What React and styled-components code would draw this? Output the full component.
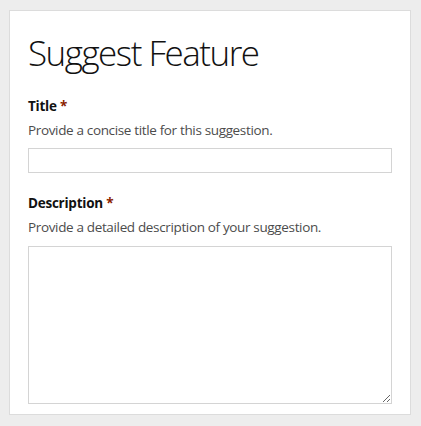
import React from "react";
import styled, { createGlobalStyle } from "styled-components";

const Global = createGlobalStyle`
  html, body { margin: 0; padding: 0; background: #ededed; }
  body { font-family: "Open Sans", "Noto Sans", sans-serif; }
  * { box-sizing: border-box; }
`;

const Page = styled.div`
  padding: 10px 10px 10px 9px;
`;

const Card = styled.div`
  width: 402px;
  height: 405px;
  background: #fff;
  border: 1px solid #dcdcdc;
  padding: 19px 18px 0 18px;
  display: flex;
  flex-direction: column;
`;

const Heading = styled.h1`
  margin: 0;
  font-family: "Open Sans", sans-serif;
  font-weight: 300;
  font-size: 35px;
  letter-spacing: -1.5px;
  line-height: 46px;
  color: #111;
`;

const Field = styled.div`
  display: flex;
  flex-direction: column;
  margin-top: ${(p) => p.$top}px;
`;

const Label = styled.label`
  font-weight: 700;
  font-size: 13.5px;
  letter-spacing: -0.25px;
  line-height: 20px;
  color: #111;
`;

const Star = styled.span`
  color: #8a1c00;
`;

const Help = styled.div`
  font-size: 13.5px;
  letter-spacing: -0.35px;
  line-height: 20px;
  color: #4c4c4c;
  margin-top: 4px;
`;

const Input = styled.input`
  margin-top: 8px;
  width: 364px;
  height: 25px;
  border: 1px solid #d4d4d4;
  background: #fff;
  outline: none;
`;

const TextArea = styled.textarea`
  margin-top: 9px;
  width: 364px;
  height: 158px;
  border: 1px solid #d4d4d4;
  background: #fff;
  outline: none;
  resize: vertical;
`;

export default function App() {
  return (
    <>
      <Global />
      <Page>
        <Card>
          <Heading>Suggest Feature</Heading>
          <Field $top={20}>
            <Label>
              Title <Star>*</Star>
            </Label>
            <Help>Provide a concise title for this suggestion.</Help>
            <Input type="text" />
          </Field>
          <Field $top={20}>
            <Label>
              Description <Star>*</Star>
            </Label>
            <Help>Provide a detailed description of your suggestion.</Help>
            <TextArea />
          </Field>
        </Card>
      </Page>
    </>
  );
}
